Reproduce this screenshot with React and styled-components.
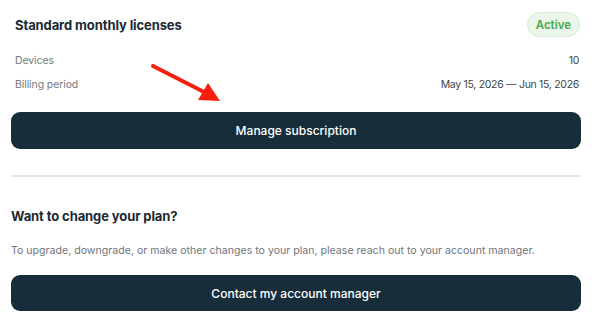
import React from "react";
import styled, { createGlobalStyle } from "styled-components";

const Global = createGlobalStyle`
  html, body { margin: 0; padding: 0; background: #ffffff; }
  body { font-family: "Inter", "Noto Sans", sans-serif; -webkit-font-smoothing: antialiased; }
`;

const Page = styled.div`
  width: 597px;
  height: 326px;
  box-sizing: border-box;
  padding: 12px 16px 0 11px;
  position: relative;
  overflow: hidden;
`;

const Summary = styled.section`
  padding: 0 2px 0 4px;
`;

const Header = styled.div`
  display: flex;
  align-items: center;
  justify-content: space-between;
  height: 25px;
`;

const Title = styled.h2`
  margin: 0;
  font-size: 13px;
  font-weight: 700;
  color: #1b2a33;
  letter-spacing: -0.1px;
`;

const Badge = styled.span`
  display: inline-flex;
  align-items: center;
  justify-content: center;
  height: 25px;
  box-sizing: border-box;
  padding: 0 8px;
  margin-right: -1px;
  border-radius: 13px;
  background: #eaf6ea;
  border: 1px solid #d4ebd4;
  color: #4aa84c;
  font-size: 11.5px;
  font-weight: 600;
`;

const Rows = styled.div`
  display: flex;
  flex-direction: column;
  gap: 12px;
  margin-top: 17px;
`;

const Row = styled.div`
  display: flex;
  justify-content: space-between;
  align-items: center;
  height: 12px;
  font-size: 10.5px;
  letter-spacing: -0.1px;
`;

const Label = styled.span`
  color: #747b80;
`;

const Value = styled.span`
  color: #3d464d;
  letter-spacing: -0.3px;
`;

const Button = styled.button`
  display: flex;
  align-items: center;
  justify-content: center;
  width: 100%;
  height: ${(p) => p.$h}px;
  margin-top: ${(p) => p.$top}px;
  border: none;
  border-radius: 9px;
  background: #172e3a;
  color: #ffffff;
  font-family: inherit;
  font-size: 12px;
  font-weight: 500;
  cursor: pointer;
`;

const Divider = styled.hr`
  margin: 26px 0 0;
  border: none;
  height: 2px;
  background: #e6e6e9;
`;

const Heading = styled.h3`
  margin: 31px 0 0;
  font-size: 13px;
  font-weight: 700;
  color: #1b2a33;
  line-height: 16px;
  letter-spacing: -0.1px;
`;

const Text = styled.p`
  margin: 20px 0 0;
  font-size: 10.6px;
  line-height: 14px;
  color: #6f767b;
`;

const Arrow = styled.svg`
  position: absolute;
  left: 148px;
  top: 60px;
`;

export default function App() {
  return (
    <>
      <Global />
      <Page>
        <Summary>
          <Header>
            <Title>Standard monthly licenses</Title>
            <Badge>Active</Badge>
          </Header>
          <Rows>
            <Row>
              <Label>Devices</Label>
              <Value>10</Value>
            </Row>
            <Row>
              <Label>Billing period</Label>
              <Value>May 15, 2026 — Jun 15, 2026</Value>
            </Row>
          </Rows>
        </Summary>
        <Button $top={22} $h={37}>Manage subscription</Button>
        <Divider />
        <Heading>Want to change your plan?</Heading>
        <Text>
          To upgrade, downgrade, or make other changes to your plan, please reach out to your account manager.
        </Text>
        <Button $top={17} $h={36}>Contact my account manager</Button>
        <Arrow width="80" height="46" viewBox="0 0 80 46">
          <line x1="5" y1="6" x2="58" y2="33" stroke="#f7200f" strokeWidth="4" strokeLinecap="round" />
          <polygon points="60,23 50,40 72,41" fill="#f7200f" />
        </Arrow>
      </Page>
    </>
  );
}
